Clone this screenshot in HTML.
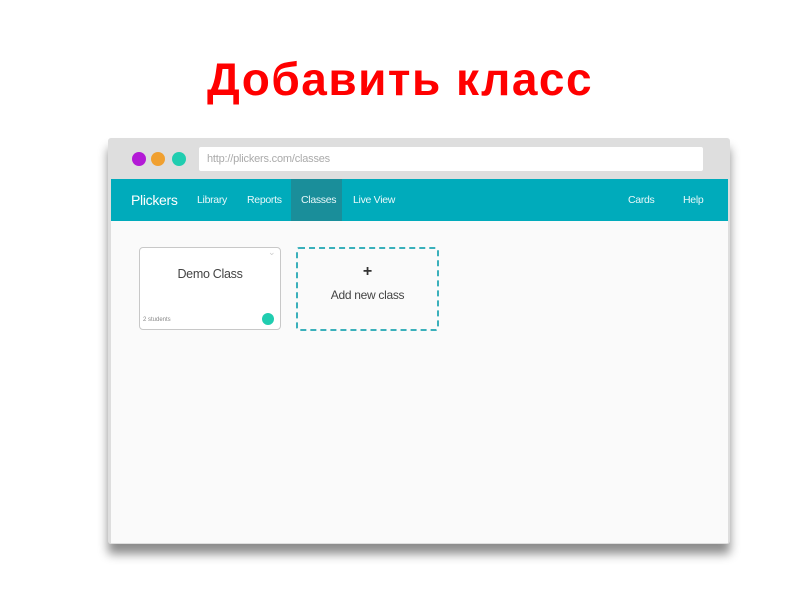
<!DOCTYPE html>
<html><head><meta charset="utf-8"><style>
body{margin:0;width:800px;height:600px;background:#fff;position:relative;overflow:hidden;font-family:"Liberation Sans",sans-serif}
.a{position:absolute}
h1{position:absolute;left:0;width:800px;top:52px;margin:0;text-align:center;font-size:46px;font-weight:bold;color:#f00;letter-spacing:1.5px}
.nav span{position:absolute;top:194px;font-size:10.5px;color:#e8f8fa;letter-spacing:-0.3px}
</style></head><body>
<h1>Добавить класс</h1>
<div class="a" style="left:108px;top:138px;width:622px;height:406px;background:#dedede;border-radius:3px;box-shadow:0 10px 10px rgba(0,0,0,0.45)"></div>
<div class="a" style="left:111px;top:221px;width:617px;height:322px;background:#fafafa"></div>
<div class="a" style="left:132px;top:152px;width:14px;height:14px;border-radius:50%;background:#b31ad6"></div>
<div class="a" style="left:151px;top:152px;width:14px;height:14px;border-radius:50%;background:#f0a030"></div>
<div class="a" style="left:172px;top:152px;width:14px;height:14px;border-radius:50%;background:#20cdb0"></div>
<div class="a" style="left:199px;top:147px;width:504px;height:24px;background:#fff;border-radius:2px"></div>
<div class="a" style="left:207px;top:153px;font-size:11px;color:#aaa;letter-spacing:-0.2px">http://plickers.com/classes</div>
<div class="a" style="left:111px;top:179px;width:617px;height:42px;background:#00abbb"></div>
<div class="a" style="left:291px;top:179px;width:51px;height:42px;background:#1a8e9a"></div>
<div class="nav">
<span style="left:131px;top:192px;font-size:14px;color:#fff">Plickers</span>
<span style="left:197px">Library</span>
<span style="left:247px">Reports</span>
<span style="left:301px">Classes</span>
<span style="left:353px">Live View</span>
<span style="left:628px">Cards</span>
<span style="left:683px">Help</span>
</div>
<div class="a" style="left:139px;top:247px;width:140px;height:81px;background:#fff;border:1px solid #c8c8c8;border-radius:4px"></div>
<div class="a" style="left:139px;top:267px;width:142px;text-align:center;font-size:12.5px;color:#444;letter-spacing:-0.3px">Demo Class</div>
<div class="a" style="left:268px;top:247px;font-size:9px;color:#ccc">⌄</div>
<div class="a" style="left:143px;top:317px;font-size:6px;color:#888">2 students</div>
<div class="a" style="left:262px;top:313px;width:12px;height:12px;border-radius:50%;background:#20cdb0"></div>
<div class="a" style="left:296px;top:247px;width:139px;height:80px;border:2px dashed #3ab0bb;border-radius:3px"></div>
<div class="a" style="left:296px;top:263px;width:143px;text-align:center;font-size:16px;font-weight:bold;color:#333">+</div>
<div class="a" style="left:296px;top:288px;width:143px;text-align:center;font-size:12px;color:#444;letter-spacing:-0.3px">Add new class</div>
</body></html>
